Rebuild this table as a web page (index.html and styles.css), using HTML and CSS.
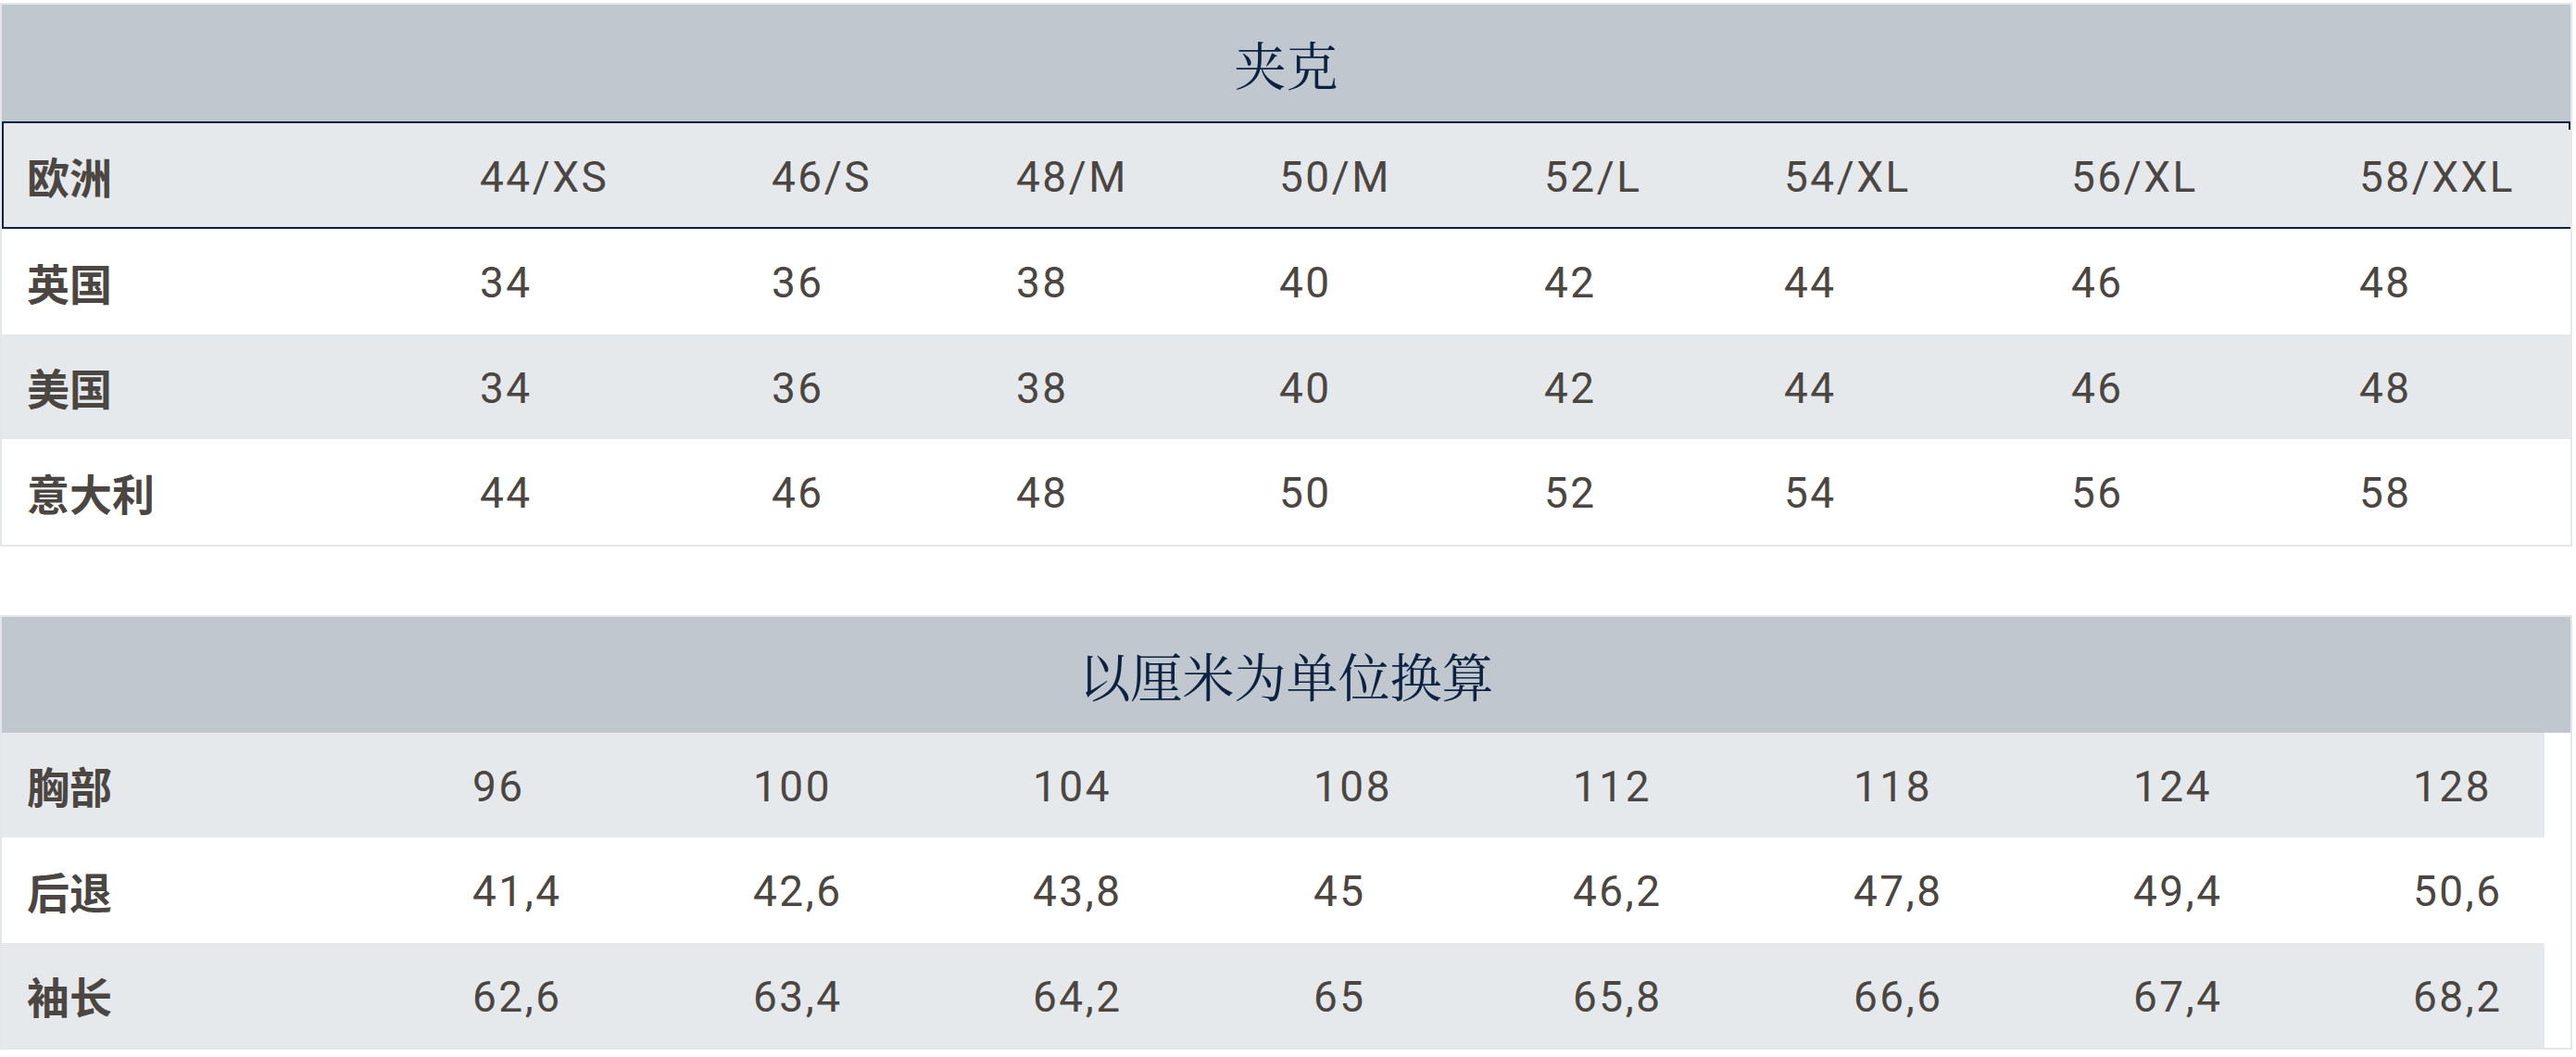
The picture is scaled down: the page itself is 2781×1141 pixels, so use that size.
FILE: index.html
```html
<!DOCTYPE html>
<html lang="zh">
<head>
<meta charset="utf-8">
<title>尺码表</title>
<link rel="stylesheet" href="styles.css">
</head>
<body>
<div class="chart">
  <section class="size-block">
    <div class="caption">夹克</div>
    <table class="grid grid-conv">
      <colgroup>
        <col class="c-label"><col class="c1"><col class="c2"><col class="c3"><col class="c4"><col class="c5"><col class="c6"><col class="c7"><col class="c8">
      </colgroup>
      <tbody>
        <tr class="row-eu shade"><th>欧洲</th><td>44/XS</td><td>46/S</td><td>48/M</td><td>50/M</td><td>52/L</td><td>54/XL</td><td>56/XL</td><td class="last">58/XXL</td></tr>
        <tr><th>英国</th><td>34</td><td>36</td><td>38</td><td>40</td><td>42</td><td>44</td><td>46</td><td>48</td></tr>
        <tr class="shade"><th>美国</th><td>34</td><td>36</td><td>38</td><td>40</td><td>42</td><td>44</td><td>46</td><td>48</td></tr>
        <tr><th>意大利</th><td>44</td><td>46</td><td>48</td><td>50</td><td>52</td><td>54</td><td>56</td><td>58</td></tr>
      </tbody>
    </table>
  </section>

  <section class="size-block size-block-cm">
    <div class="caption caption-cm">以厘米为单位换算</div>
    <table class="grid grid-cm">
      <colgroup>
        <col class="c-label"><col class="c1"><col class="c2"><col class="c3"><col class="c4"><col class="c5"><col class="c6"><col class="c7"><col class="c8">
      </colgroup>
      <tbody>
        <tr class="shade"><th>胸部</th><td>96</td><td>100</td><td>104</td><td>108</td><td>112</td><td>118</td><td>124</td><td>128</td></tr>
        <tr><th>后退</th><td>41,4</td><td>42,6</td><td>43,8</td><td>45</td><td>46,2</td><td>47,8</td><td>49,4</td><td>50,6</td></tr>
        <tr class="shade"><th>袖长</th><td>62,6</td><td>63,4</td><td>64,2</td><td>65</td><td>65,8</td><td>66,6</td><td>67,4</td><td>68,2</td></tr>
      </tbody>
    </table>
  </section>
</div>
</body>
</html>
```

FILE: styles.css
```css
html, body {
  margin: 0;
  padding: 0;
  background: #ffffff;
}

.chart {
  width: 2777px;
  padding-top: 3px;
}

.size-block {
  border: 2px solid #e3e7ea;
  background: #ffffff;
}

.size-block-cm {
  margin-top: 74px;
}

.caption {
  height: 126px;
  background: #c0c7cf;
  display: flex;
  align-items: center;
  justify-content: center;
  font-family: "Noto Serif CJK SC", "Noto Serif SC", "Source Han Serif SC", "AR PL UMing CN", "Noto Sans CJK SC", serif;
  font-size: 56px;
  font-weight: 400;
  color: #0b2341;
}

.caption-cm {
  height: 125px;
}

.grid {
  border-collapse: separate;
  border-spacing: 0;
  table-layout: fixed;
  font-family: Roboto, "Noto Sans CJK SC", sans-serif;
  font-size: 46px;
  color: #4b4641;
}

.grid-conv {
  width: 2773px;
}

.grid-cm {
  width: 2745px;
}

.grid tr {
  height: 113.5px;
}

.grid th,
.grid td {
  padding: 0 0 0 26px;
  vertical-align: middle;
  text-align: left;
  white-space: nowrap;
  line-height: 54px;
}

.grid th {
  font-family: "Noto Sans CJK SC", sans-serif;
  font-weight: 700;
  padding-left: 27px;
}

.grid td {
  font-weight: 400;
  letter-spacing: 2.5px;
  padding-top: 3px;
}

.shade th,
.shade td {
  background: #e5e9ec;
}

.grid .row-eu {
  height: 116px;
}

.row-eu th,
.row-eu td {
  border-top: 2px solid #0c2340;
  border-bottom: 2px solid #0c2340;
}

.row-eu th {
  border-left: 2px solid #0c2340;
  padding-left: 25px;
}

.row-eu .last {
  position: relative;
}

.row-eu .last::after {
  content: "";
  position: absolute;
  top: -2px;
  right: 0;
  width: 2px;
  height: 9px;
  background: #0c2340;
}

/* column widths: conversion table */
.grid-conv .c-label { width: 490px; }
.grid-conv .c1 { width: 315px; }
.grid-conv .c2 { width: 264px; }
.grid-conv .c3 { width: 284px; }
.grid-conv .c4 { width: 286px; }
.grid-conv .c5 { width: 259px; }
.grid-conv .c6 { width: 310px; }
.grid-conv .c7 { width: 311px; }
.grid-conv .c8 { width: 254px; }

/* column widths: centimetre table */
.grid-cm .c-label { width: 482px; }
.grid-cm .c1 { width: 303px; }
.grid-cm .c2 { width: 302px; }
.grid-cm .c3 { width: 303px; }
.grid-cm .c4 { width: 280px; }
.grid-cm .c5 { width: 303px; }
.grid-cm .c6 { width: 302px; }
.grid-cm .c7 { width: 302px; }
.grid-cm .c8 { width: 168px; }
```
